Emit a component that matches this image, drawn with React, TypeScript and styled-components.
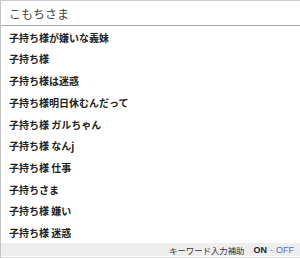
import styled, { createGlobalStyle } from "styled-components";

const GlobalStyle = createGlobalStyle`
    html, body {
        margin: 0;
        padding: 0;
        background: #ffffff;
    }
    body {
        width: 300px;
        height: 258px;
        overflow: hidden;
        font-family: "Noto Sans CJK JP", "Noto Sans", sans-serif;
    }
`

const Panel = styled.div`
    width: 300px;
    height: 258px;
    display: flex;
    flex-direction: column;
    background: #ffffff;
    border-top: 1px solid #c8cfe0;
    border-left: 1px solid #c4c4c4;
    box-sizing: border-box;
`

const InputRow = styled.div`
    height: 25px;
    display: flex;
    align-items: center;
    padding-left: 8px;
    border-bottom: 1px solid #aaaaaa;
    font-size: 12px;
    color: #444444;
`

const List = styled.ul`
    list-style: none;
    margin: 0;
    padding: 0;
    flex: 1;
`

const Item = styled.li`
    height: 21.7px;
    display: flex;
    align-items: center;
    padding-left: 8px;
    font-size: 10px;
    font-weight: bold;
    color: #222222;
`

const Footer = styled.div`
    height: 13px;
    margin-bottom: 1px;
    background: #eeeeee;
    display: flex;
    align-items: center;
    justify-content: flex-end;
    padding-right: 6px;
    font-size: 9px;
    color: #333333;
    gap: 3px;
`

const Label = styled.span`
    font-size: 8.4px;
    margin-right: 6px;
`

const Toggle = styled.span<{ $on?: boolean }>`
    font-family: "Liberation Sans", Arial, sans-serif;
    color: ${p => (p.$on ? "#222222" : "#5565c8")};
    font-weight: ${p => (p.$on ? "bold" : "normal")};
`

const Dash = styled.span`
    color: #888888;
    font-family: "Liberation Sans", Arial, sans-serif;
`

const Under = styled.div`
    height: 1px;
    background: #d8d8d8;
`

const suggestions = [
    "子持ち様が嫌いな義妹",
    "子持ち様",
    "子持ち様は迷惑",
    "子持ち様明日休むんだって",
    "子持ち様 ガルちゃん",
    "子持ち様 なんj",
    "子持ち様 仕事",
    "子持ちさま",
    "子持ち様 嫌い",
    "子持ち様 迷惑",
];

export default function App() {
    return (
        <Panel>
            <GlobalStyle />
            <InputRow>こもちさま</InputRow>
            <List>
                {suggestions.map(s => (
                    <Item key={s}>{s}</Item>
                ))}
            </List>
            <Footer>
                <Label>キーワード入力補助</Label>
                <Toggle $on>ON</Toggle>
                <Dash>-</Dash>
                <Toggle>OFF</Toggle>
            </Footer>
            <Under />
        </Panel>
    );
}
